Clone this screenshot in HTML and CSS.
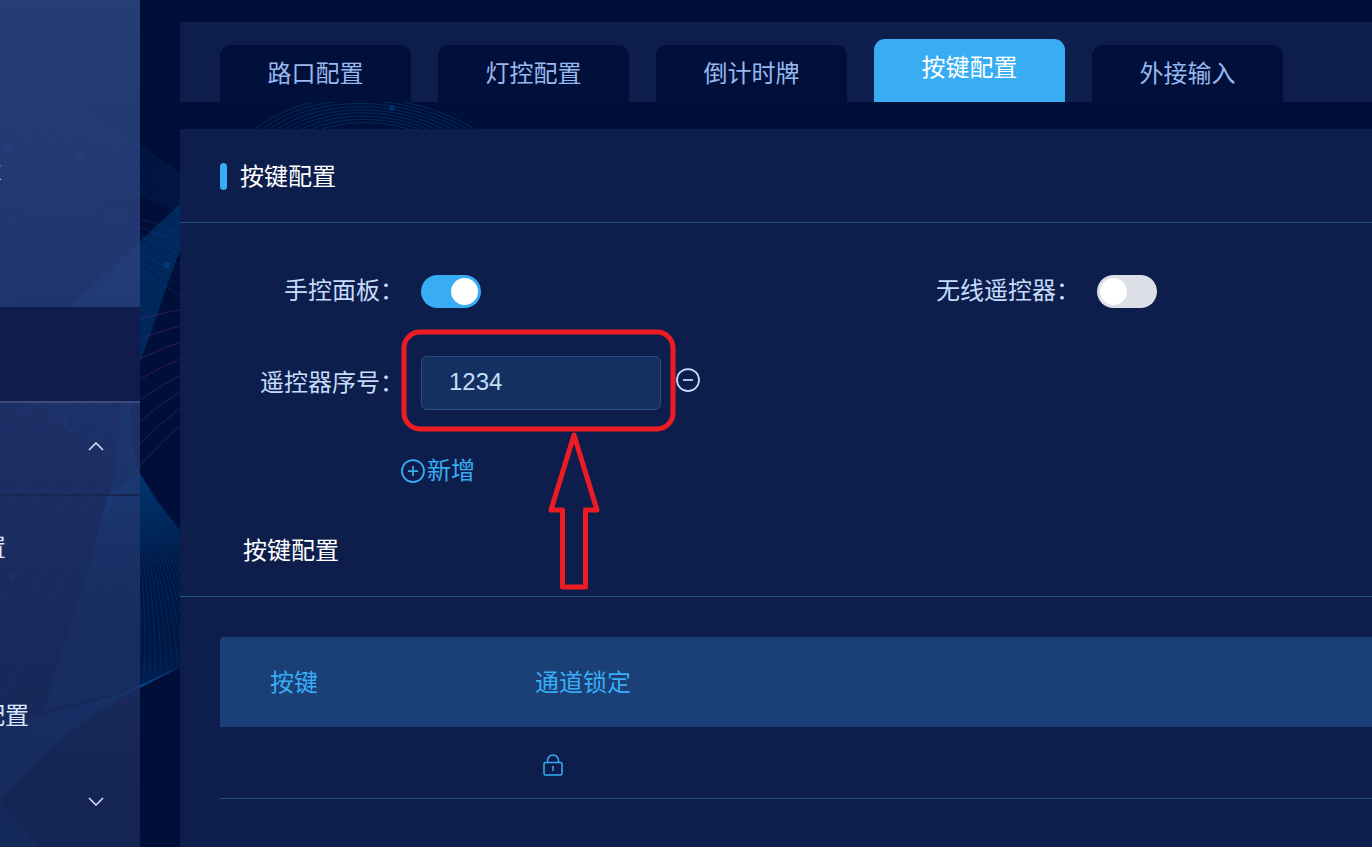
FILE: index.html
```html
<!DOCTYPE html>
<html lang="zh-CN">
<head>
<meta charset="utf-8">
<title>按键配置</title>
<link rel="stylesheet" href="styles.css">
</head>
<body>
<svg class="backdrop" id="backdrop" aria-hidden="true">
  <defs>
    <linearGradient id="veil" x1="0" y1="0" x2="0" y2="1">
      <stop offset="0" stop-color="#00539a" stop-opacity=".45"/>
      <stop offset=".4" stop-color="#00539a" stop-opacity=".12"/>
      <stop offset=".75" stop-color="#00539a" stop-opacity=".12"/>
      <stop offset="1" stop-color="#00539a" stop-opacity=".35"/>
    </linearGradient>
  </defs>
  <path fill="#00539a" fill-opacity=".32" d="M68 310 L184 200 L184 240 C168 280 155 325 140 362 C130 385 126 425 140 475 L108 500 C122 450 122 390 124 340 Z"/>
  <path fill="url(#veil)" d="M108 495 L140 473 C150 493 165 513 184 534 L184 664 L140 688 L45 710 C65 640 90 570 108 495 Z"/>
  <path fill="#00539a" fill-opacity=".3" d="M36 717 C80 705 120 695 140 688 C90 712 40 752 0 802 L0 790 Z"/>
  <path fill="#00539a" fill-opacity=".25" d="M0 720 L36 717 L0 790 Z M0 802 L40 847 L0 847 Z"/>
</svg>
<div class="app">
  <nav class="sidebar">
    <div class="side-top"><a class="side-link edge" href="#">置</a></div>
    <div class="side-current"></div>
    <button class="side-group open" type="button" aria-label="收起">
      <svg class="chevron" viewBox="0 0 16 9"><path d="M1 8 8 1l7 7"/></svg>
    </button>
    <div class="side-items">
      <a class="side-link short" href="#">置</a>
      <a class="side-link" href="#" aria-label="菜单"></a>
      <a class="side-link wide" href="#">配置</a>
    </div>
    <button class="side-group" type="button" aria-label="展开">
      <svg class="chevron" viewBox="0 0 16 9"><path d="m1 1 7 7 7-7"/></svg>
    </button>
  </nav>
  <main class="main">
    <div class="tabs">
      <button class="tab" type="button">路口配置</button>
      <button class="tab" type="button">灯控配置</button>
      <button class="tab" type="button">倒计时牌</button>
      <button class="tab active" type="button">按键配置</button>
      <button class="tab" type="button">外接输入</button>
    </div>
    <section class="panel">
      <h1 class="heading marked">按键配置</h1>
      <form class="form">
        <div class="field">
          <label class="label" for="hand">手控面板：</label>
          <input class="switch" id="hand" type="checkbox" checked>
        </div>
        <div class="field">
          <label class="label" for="wireless">无线遥控器：</label>
          <input class="switch" id="wireless" type="checkbox">
        </div>
        <div class="field serial">
          <label class="label" for="serial">遥控器序号：</label>
          <div class="input-wrap">
            <input class="text-input" id="serial" type="text" value="1234">
            <button class="icon-button" type="button" aria-label="删除">
              <svg class="round-icon" viewBox="0 0 24 24"><circle cx="12" cy="12" r="11"/><path d="M7 12h10"/></svg>
            </button>
            <svg class="callout" viewBox="0 0 280 264" aria-hidden="true">
              <rect x="4" y="4" width="269" height="97" rx="16"/>
              <path d="M174 107 197 182H185.500V259H162.500V182H151Z"/>
            </svg>
          </div>
        </div>
        <button class="add" type="button">
          <svg class="round-icon" viewBox="0 0 24 24"><circle cx="12" cy="12" r="11"/><path d="M7 12h10M12 7v10"/></svg>新增
        </button>
      </form>
      <h2 class="heading sub">按键配置</h2>
      <table class="table">
        <thead><tr><th class="key-col">按键</th><th>通道锁定</th></tr></thead>
        <tbody><tr><td></td><td>
          <svg class="lock" viewBox="0 0 20 22"><path d="M4.500 8V6.500a5.500 5.500 0 0 1 11 0V8M10 12v5"/><rect x="1" y="8.500" width="18" height="12.500" rx="1.500"/></svg>
        </td></tr></tbody>
      </table>
    </section>
  </main>
</div>
<script src="backdrop.js"></script>
</body>
</html>
```
FILE: styles.css
```css
* { box-sizing: border-box; }
body {
  margin: 0;
  background: #000f38;
  color: #c6dcfb;
  font: 24px/32px "Liberation Sans", "Noto Sans CJK SC", sans-serif;
  overflow: hidden;
}
button { margin: 0; padding: 0; border: 0; background: none; color: inherit; font: inherit; cursor: pointer; }
svg { display: block; fill: none; }
.backdrop { position: absolute; inset: 0; width: 100%; height: 100%; }
.app { position: relative; display: flex; min-height: 100vh; }

.sidebar {
  flex: 0 0 140px;
  overflow: hidden;
  background: linear-gradient(rgba(51, 76, 138, .75), rgba(43, 66, 128, .75) 36%, rgba(37, 59, 116, .75) 50%, rgba(27, 43, 92, .75));
}
.side-top { height: 307px; padding-top: 127px; }
.side-current { height: 94px; background: #101c4c; }
.side-group { display: flex; width: 100%; height: 88px; align-items: center; justify-content: flex-end; padding-right: 36px; }
.side-group.open { height: 95px; padding-bottom: 4px; border-top: 2px solid #3c4b7b; border-bottom: 2px solid #16264f; }
.chevron { width: 16px; height: 9px; stroke: #dbe8ff; stroke-width: 1.5; }
.side-items { padding-top: 9px; }
.side-link { display: flex; height: 84px; align-items: center; justify-content: flex-end; padding-top: 2px; color: #dbe8ff; text-decoration: none; white-space: nowrap; }
.side-link.edge { width: 2px; }
.side-link.short { width: 6px; }
.side-link.wide { width: 29px; }

.main { flex: 1; min-width: 0; display: flex; flex-direction: column; gap: 27px; padding: 22px 0 0 40px; }
.tabs { display: flex; height: 80px; align-items: flex-end; gap: 27px; padding-left: 40px; background: #0d1e4c; overflow: hidden; }
.tab { flex: 0 0 191px; height: 57px; border-radius: 11px 11px 0 0; background: #00103a; color: #98b8f0; }
.tab.active { height: 63px; padding-bottom: 6px; background: #38adf4; color: #fff; }

.panel { flex: 1; background: #0d1e4c; }
.heading { display: flex; height: 94px; align-items: center; margin: 0; padding-top: 2px; border-bottom: 1px solid #214f86; color: #fff; font-size: 24px; font-weight: 400; }
.marked { gap: 13px; padding-left: 40px; }
.marked::before { content: ""; width: 7px; height: 27px; border-radius: 4px; background: #38adf4; }
.sub { padding-left: 63px; }

.form { display: grid; grid-template-columns: 676px 1fr; row-gap: 38px; padding: 41px 0 9px; }
.field { display: flex; height: 54px; align-items: center; gap: 17px; }
.serial, .add { grid-column: 1 / -1; }
.label { width: 224px; text-align: right; white-space: nowrap; }
.switch {
  appearance: none;
  display: flex;
  width: 60px;
  height: 33px;
  margin: 0;
  padding: 3px;
  border-radius: 17px;
  background: #dcdfe6;
}
.switch::before { content: ""; width: 27px; height: 27px; border-radius: 50%; background: #fff; }
.switch:checked { justify-content: flex-end; background: #38adf4; }
.input-wrap { position: relative; display: flex; align-items: center; gap: 15px; }
.text-input {
  width: 240px;
  height: 54px;
  padding: 0 27px 2px;
  border: 1px solid #264f85;
  border-radius: 6px;
  outline: 0;
  background: #133060;
  color: #c6dcfb;
  font: inherit;
}
.icon-button { height: 30px; padding-bottom: 6px; }
.round-icon { width: 24px; height: 24px; stroke: currentColor; stroke-width: 1.750; }
.callout { position: absolute; left: -21px; top: -28px; width: 280px; height: 264px; stroke: #ed1c24; stroke-width: 5; stroke-linejoin: round; pointer-events: none; }
.add { display: flex; height: 46px; align-items: center; justify-self: start; gap: 2px; margin-left: 221px; color: #38adf4; }

.table { width: calc(100% - 40px); margin: 40px 0 0 40px; border-collapse: separate; border-spacing: 0; table-layout: fixed; }
.table th { height: 90px; padding: 2px 0 0; background: #1b3f77; color: #38adf4; font-weight: 400; text-align: left; }
.table .key-col { width: 315px; padding-left: 50px; border-top-left-radius: 4px; }
.table td { height: 72px; padding: 4px 8px 0; border-bottom: 1px solid #214f86; }
.lock { width: 20px; height: 22px; stroke: #38adf4; stroke-width: 1.500; }
```
FILE: backdrop.js
```js
// Each family fills the space between two cubic curves with evenly spaced lines.
const families = [
  { a: [-10, 64, 50, 90, 120, 130, 185, 178], b: [-10, 165, 50, 165, 120, 180, 185, 215], n: 15, color: "#0b4f96", alpha: .32 },
  { a: [-10, 210, 40, 195, 100, 200, 185, 235], b: [-10, 320, 40, 255, 100, 235, 185, 300], n: 7, color: "#2a3c9a", alpha: .3 },
  { a: [-90, 500, -20, 400, 80, 325, 185, 309], b: [-5, 720, 50, 590, 110, 485, 185, 421], n: 8, color: "#5c1c86", alpha: .55 },
  { a: [108, 495, 95, 560, 70, 630, 42, 714], b: [140, 475, 190, 545, 220, 600, 240, 640], n: 36, color: "#0068b8", alpha: .22 },
  { a: [40, 400, 70, 430, 90, 450, 110, 470], b: [110, 400, 115, 420, 120, 440, 124, 450], n: 12, color: "#0068b8", alpha: .2 },
  { a: [68, 310, 110, 270, 150, 232, 185, 200], b: [140, 360, 150, 320, 170, 270, 185, 240], n: 16, color: "#006ab0", alpha: .12 },
  { a: [245, 138, 300, 84, 405, 84, 485, 135], b: [290, 145, 330, 115, 400, 115, 440, 145], n: 9, color: "#006caf", alpha: .3 },
  { a: [-5, 740, 30, 725, 60, 715, 140, 688], b: [-5, 807, 40, 750, 90, 712, 185, 664], n: 12, color: "#0065c0", alpha: .16 },
  { a: [-5, 797, 10, 815, 25, 835, 42, 850], b: [-30, 797, -20, 815, -5, 835, 5, 850], n: 6, color: "#0065c0", alpha: .3 }
];
const dots = [[8, 149], [80, 158], [65, 423], [11, 577], [167, 265], [392, 108]];
const ns = "http://www.w3.org/2000/svg";
const backdrop = document.getElementById("backdrop");

function add(tag, attributes) {
  const node = document.createElementNS(ns, tag);
  for (const [name, value] of Object.entries(attributes)) node.setAttribute(name, value);
  backdrop.appendChild(node);
}

for (const { a, b, n, color, alpha } of families) {
  for (let i = 0; i < n; i++) {
    const t = i / (n - 1);
    const p = a.map((v, k) => v + (b[k] - v) * t);
    add("path", {
      d: `M${p[0]} ${p[1]}C${p.slice(2).join(" ")}`,
      stroke: color,
      "stroke-opacity": alpha
    });
  }
}
for (const [cx, cy] of dots) add("circle", { cx, cy, r: 3, fill: "#0079c8", "fill-opacity": .25 });
```
